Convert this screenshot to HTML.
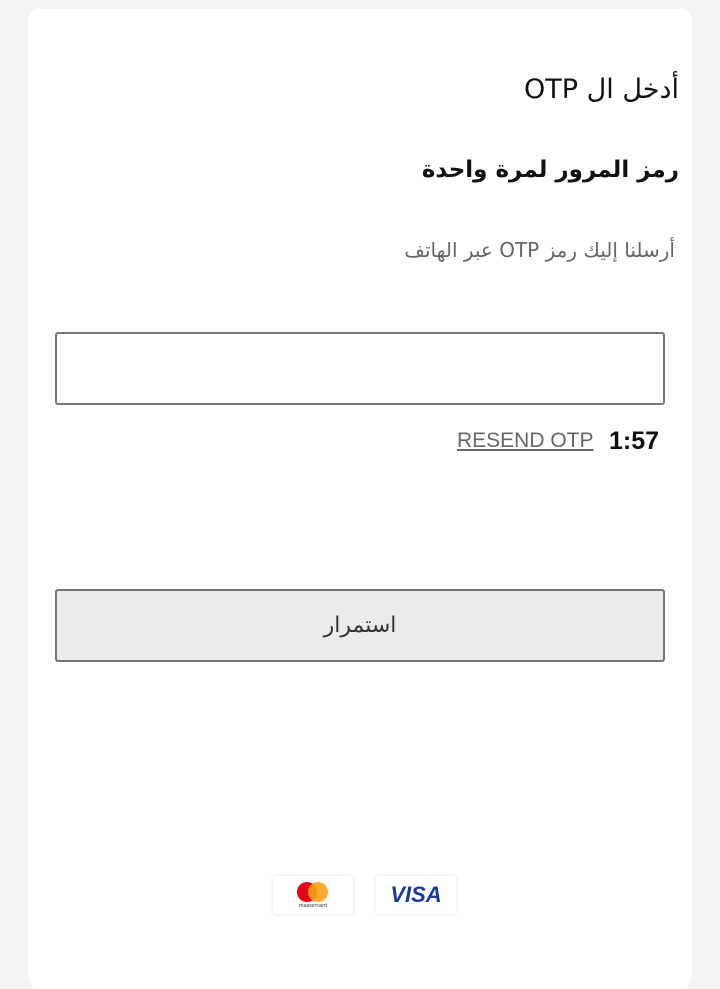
<!DOCTYPE html>
<html><head><meta charset="utf-8"><style>
body{margin:0;width:720px;height:959px;background:#f3f3f3;font-family:"DejaVu Sans","Liberation Sans",sans-serif;overflow:hidden;position:relative}
.card{position:absolute;left:28px;top:9px;width:664px;height:980px;background:#fff;border-radius:12px}
.t{position:absolute;right:41px;direction:rtl;white-space:nowrap}
.box{position:absolute;left:55px;width:606px;border:2px solid #777;border-radius:3px}
</style></head><body>
<div class="card"></div>
<div class="t" style="top:74px;font-size:27px;color:#111">أدخل ال OTP</div>
<div class="t" style="top:157px;font-size:23px;color:#111;font-weight:bold;letter-spacing:-1px">رمز المرور لمرة واحدة</div>
<div class="t" style="top:238px;right:45px;font-size:20px;color:#666">أرسلنا إليك رمز OTP عبر الهاتف</div>
<div class="box" style="top:332px;height:69px;background:#fff"></div>
<div style="position:absolute;left:457px;top:429px;font-family:'Liberation Sans',sans-serif;font-size:21px;color:#666;text-decoration:underline">RESEND OTP</div>
<div style="position:absolute;left:609px;top:427px;font-family:'Liberation Sans',sans-serif;font-size:25px;font-weight:bold;color:#111">1:57</div>
<div class="box" style="top:589px;height:69px;background:#ebebeb;display:flex;align-items:center;justify-content:center;font-size:22px;color:#333">استمرار</div>
<div style="position:absolute;left:273px;top:876px;width:80px;height:38px;background:#fff;box-shadow:0 0 4px rgba(0,0,0,.12);border-radius:3px">
<div style="position:absolute;left:24px;top:6px;width:20px;height:20px;border-radius:50%;background:#e3001b"></div>
<div style="position:absolute;left:35px;top:6px;width:20px;height:20px;border-radius:50%;background:#f9a11b;opacity:.9"></div>
<div style="position:absolute;left:0;width:80px;top:27px;text-align:center;font-size:5px;color:#333">mastercard</div></div>
<div style="position:absolute;left:376px;top:876px;width:80px;height:38px;background:#fff;box-shadow:0 0 4px rgba(0,0,0,.12);border-radius:3px;text-align:center;line-height:38px;font-family:'Liberation Sans',sans-serif;font-weight:bold;font-style:italic;font-size:22px;color:#1a3a9a">VISA</div>
</body></html>
